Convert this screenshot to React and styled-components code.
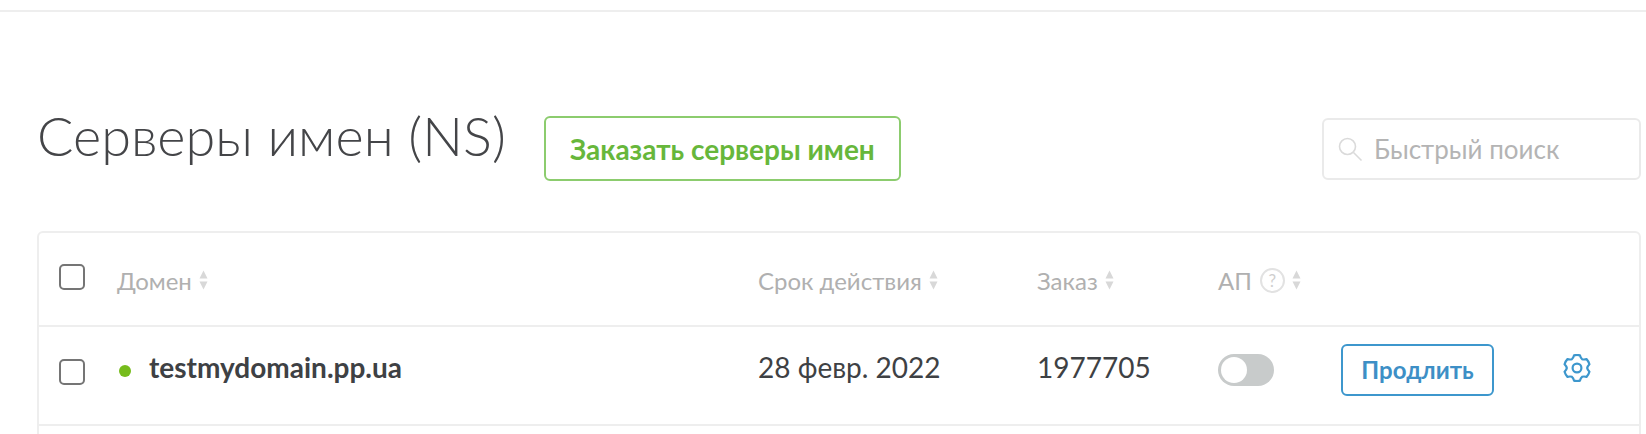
import styled, { createGlobalStyle } from 'styled-components';

const GlobalStyle = createGlobalStyle`
	html, body {
		margin: 0;
		padding: 0;
		background: #fff;
		font-family: 'Lato', 'Noto Sans', sans-serif;
		overflow: hidden;
	}
`;

const columns = [
	{ title: 'Домен', sortable: true },
	{ title: 'Срок действия', sortable: true },
	{ title: 'Заказ', sortable: true },
	{ title: 'АП', sortable: true, hint: true },
];

// six rounded lobes, one pointing straight up
const gearPath = () => {
	const pt = (r, deg) => {
		const a = (deg * Math.PI) / 180;
		return `${(14 + r * Math.cos(a)).toFixed(2)} ${(14 + r * Math.sin(a)).toFixed(2)}`;
	};
	let d = '';
	for (let i = 0; i < 6; i++) {
		const a = -90 + i * 60;
		d += `${i === 0 ? 'M' : 'L'}${pt(10.2, a - 30)} `;
		d += `Q${pt(10.6, a - 20)} ${pt(13, a - 13)} `;
		d += `Q${pt(13.4, a)} ${pt(13, a + 13)} `;
		d += `Q${pt(10.6, a + 20)} ${pt(10.2, a + 30)} `;
	}
	return d + 'Z';
};

const SortIcon = () => (
	<SortSvg viewBox="0 0 9 20" width="9" height="20">
		<path d="M4.5 0.5 L8.5 8.5 H0.5 Z" fill="#d8d8d8" />
		<path d="M4.5 19.5 L8.5 11.5 H0.5 Z" fill="#d8d8d8" />
	</SortSvg>
);

const SearchIcon = () => (
	<svg viewBox="0 0 26 26" width="26" height="26" fill="none" stroke="#dadada" strokeWidth="1.6">
		<circle cx="10.5" cy="10.5" r="8" />
		<path d="M16.5 16.5 L24.5 24.5" />
	</svg>
);

const GearIcon = () => (
	<svg viewBox="0 0 28 28" width="28" height="28" fill="none" stroke="#3d97cd" strokeWidth="2.2" strokeLinejoin="round">
		<path d={gearPath()} />
		<circle cx="14" cy="14" r="4.4" />
	</svg>
);

export default function App() {
	return (
		<Page>
			<GlobalStyle />
			<TopLine />
			<Heading>
				<Title>Серверы имен (NS)</Title>
				<OrderButton>Заказать серверы имен</OrderButton>
				<SearchBox>
					<SearchIcon />
					<SearchPlaceholder>Быстрый поиск</SearchPlaceholder>
				</SearchBox>
			</Heading>
			<Card>
				<HeadRow>
					<Checkbox />
					{columns.map((col) => (
						<HeadCell key={col.title}>
							{col.title}
							{col.hint && <Hint>?</Hint>}
							{col.sortable && <SortIcon />}
						</HeadCell>
					))}
				</HeadRow>
				<BodyRow>
					<Checkbox />
					<DomainCell>
						<StatusDot />
						testmydomain.pp.ua
					</DomainCell>
					<TextCell>28 февр. 2022</TextCell>
					<TextCell>1977705</TextCell>
					<Cell>
						<Toggle />
					</Cell>
					<Cell>
						<RenewButton>Продлить</RenewButton>
					</Cell>
					<GearCell>
						<GearIcon />
					</GearCell>
				</BodyRow>
				<EmptyRow />
			</Card>
		</Page>
	);
}

const Page = styled.div`
	width: 1646px;
	height: 434px;
	overflow: hidden;
	background: #fff;
	padding-top: 10px;
	box-sizing: border-box;
`;

const TopLine = styled.div`
	height: 2px;
	background: #eeeeee;
`;

const Heading = styled.div`
	display: flex;
	align-items: flex-start;
	height: 65px;
	margin: 104px 5px 0 37px;
`;

const Title = styled.h1`
	margin: 1px 38px 0 0;
	font-size: 54px;
	font-weight: 300;
	color: #444548;
	line-height: 38px;
	white-space: nowrap;
`;

const OrderButton = styled.button`
	width: 357px;
	height: 65px;
	border: 2px solid #8ccc6e;
	border-radius: 6px;
	background: #fff;
	color: #67b73b;
	font-family: inherit;
	font-size: 28px;
	font-weight: 700;
	padding: 0;
`;

const SearchBox = styled.div`
	display: flex;
	align-items: center;
	gap: 11px;
	box-sizing: border-box;
	width: 319px;
	height: 62px;
	margin: 2px 0 0 auto;
	padding-left: 13px;
	border: 2px solid #eaeaea;
	border-radius: 6px;
`;

const SearchPlaceholder = styled.span`
	font-size: 26px;
	color: #b4b4b4;
`;

const Card = styled.div`
	margin: 50px 5px 0 37px;
	border: 2px solid #eeeeee;
	border-radius: 6px;
	background: #fff;
`;

const rowGrid = `
	display: grid;
	grid-template-columns: 78px 641px 279px 181px 123px 222px 1fr;
	align-items: center;
	box-sizing: border-box;
	border-bottom: 2px solid #eeeeee;
`;

const HeadRow = styled.div`
	${rowGrid}
	height: 94px;
	padding-bottom: 4px;
`;

const BodyRow = styled.div`
	${rowGrid}
	height: 99px;
	padding-bottom: 8px;
`;

const EmptyRow = styled.div`
	height: 40px;
`;

const Checkbox = styled.span`
	display: block;
	box-sizing: border-box;
	width: 26px;
	height: 26px;
	margin-left: 20px;
	border: 2px solid #757575;
	border-radius: 5px;
	background: #fff;
`;

const HeadCell = styled.div`
	display: flex;
	align-items: center;
	padding-top: 6px;
	font-size: 24px;
	color: #b0b0b0;
	white-space: nowrap;
`;

const SortSvg = styled.svg`
	margin-left: 7px;
`;

const Hint = styled.span`
	display: inline-flex;
	align-items: center;
	justify-content: center;
	box-sizing: border-box;
	width: 25px;
	height: 25px;
	margin-left: 8px;
	border: 2px solid #e2e2e2;
	border-radius: 50%;
	font-size: 17px;
	color: #cfcfcf;
`;

const Cell = styled.div`
	display: flex;
	align-items: center;
	padding-bottom: 4px;
	font-size: 28px;
	color: #3e4144;
	white-space: nowrap;
`;

const TextCell = styled(Cell)`
	padding-bottom: 10px;
`;

const GearCell = styled(Cell)`
	padding-bottom: 8px;
`;

const DomainCell = styled(TextCell)`
	font-weight: 700;
`;

const StatusDot = styled.span`
	width: 12px;
	height: 12px;
	margin: 8px 18px 0 2px;
	border-radius: 50%;
	background: #76bc1c;
`;

const Toggle = styled.span`
	position: relative;
	display: block;
	width: 56px;
	height: 32px;
	border-radius: 16px;
	background: #c8cbcb;

	&::after {
		content: '';
		position: absolute;
		top: 3px;
		left: 3px;
		width: 26px;
		height: 26px;
		border-radius: 50%;
		background: #fff;
	}
`;

const RenewButton = styled.button`
	width: 153px;
	height: 52px;
	border: 2px solid #3d97cd;
	border-radius: 6px;
	background: #fff;
	color: #3d8fc6;
	font-family: inherit;
	font-size: 24px;
	font-weight: 700;
	padding: 0;
`;
